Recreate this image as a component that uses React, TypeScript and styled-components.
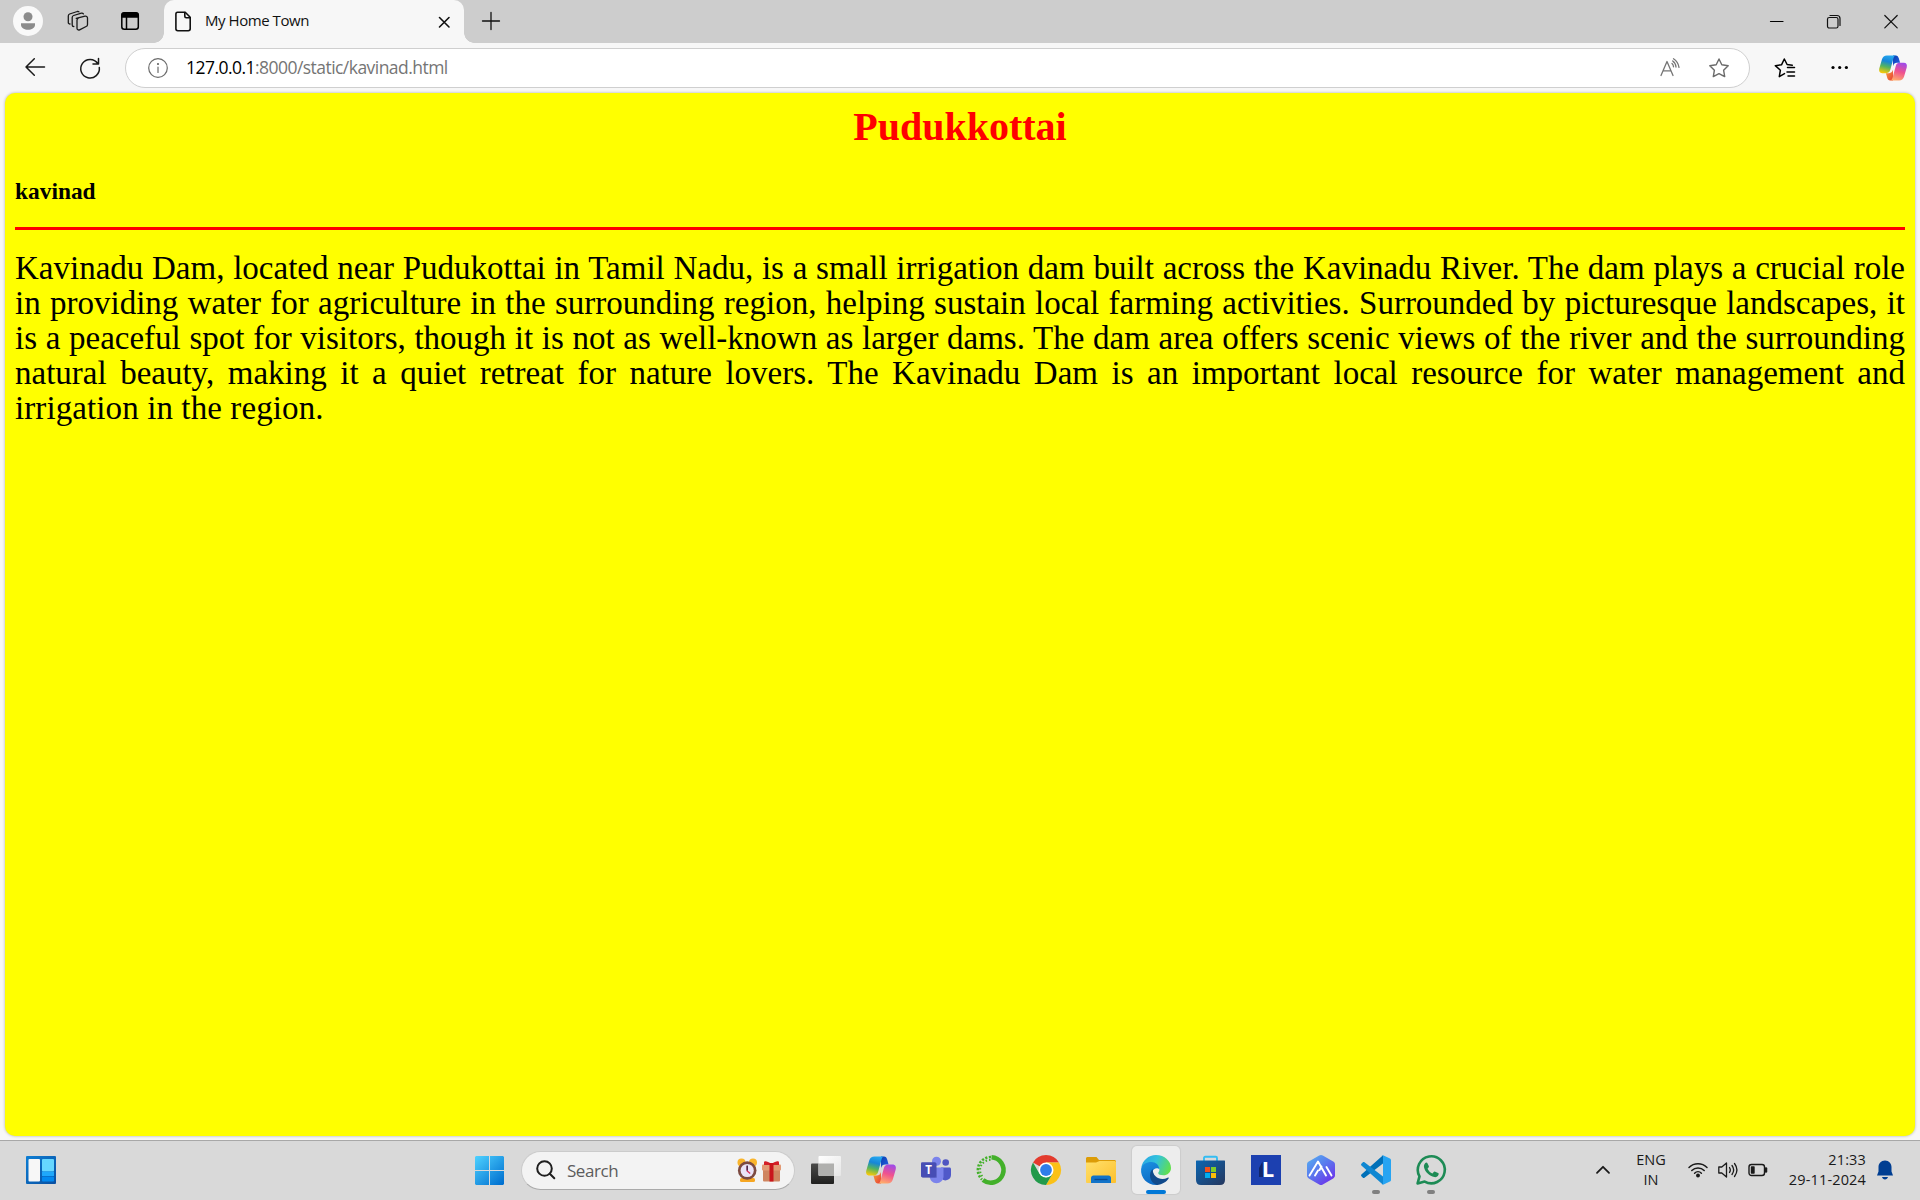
import React from "react";
import styled, { createGlobalStyle } from "styled-components";

const GlobalStyle = createGlobalStyle`
  * { box-sizing: border-box; }
  html, body, #root { margin: 0; padding: 0; height: 100%; }
  body { overflow: hidden; }
`;

const UI_FONT = `"Open Sans", "Noto Sans", sans-serif`;

const Desktop = styled.div`
  display: flex;
  flex-direction: column;
  width: 1920px;
  height: 1200px;
  background: #f7f7f7;
  font-family: ${UI_FONT};
  color: #1a1a1a;
`;

const Icon = styled.svg<{ $size: number }>`
  display: block;
  flex: none;
  width: ${(p) => p.$size}px;
  height: ${(p) => p.$size}px;
  overflow: visible;
`;

const Slot = styled.div<{ $width: number }>`
  display: flex;
  flex: none;
  align-items: center;
  justify-content: center;
  width: ${(p) => p.$width}px;
  height: 100%;
`;

const Spacer = styled.div`
  flex: 1;
`;

/* ---------- tab strip ---------- */

const TabStrip = styled.header`
  display: flex;
  flex: none;
  height: 43px;
  padding-left: 2px;
  background: #cdcdcd;
`;

const StripTools = styled.div`
  display: flex;
  width: 162px;
  height: 42px;
`;

const Avatar = styled.div`
  display: flex;
  align-items: center;
  justify-content: center;
  width: 30px;
  height: 30px;
  border-radius: 50%;
  background: #f9f9f9;
`;

const Tab = styled.div`
  position: relative;
  display: flex;
  align-items: center;
  width: 300px;
  height: 43px;
  padding: 0 10px 0 9px;
  border-radius: 10px 10px 0 0;
  background: #f7f7f7;

  &::before,
  &::after {
    content: "";
    position: absolute;
    bottom: 0;
    width: 10px;
    height: 10px;
  }
  &::before {
    left: -10px;
    background: radial-gradient(circle at 0 0, transparent 9.5px, #f7f7f7 10px);
  }
  &::after {
    right: -10px;
    background: radial-gradient(circle at 100% 0, transparent 9.5px, #f7f7f7 10px);
  }
`;

const TabTitle = styled.span`
  margin: -4px 0 0 11px;
  font-size: 15px;
  letter-spacing: -0.45px;
  color: #111;
  white-space: nowrap;
`;

/* ---------- toolbar ---------- */

const Toolbar = styled.nav`
  display: flex;
  flex: none;
  align-items: center;
  height: 50px;
  padding-left: 7px;
`;

const AddressBar = styled.div`
  display: flex;
  flex: none;
  align-items: center;
  width: 1625px;
  height: 40px;
  margin-left: 8px;
  padding-left: 12px;
  border: 1px solid #cfcfcf;
  border-radius: 20px;
  background: #fff;
`;

const Url = styled.span`
  margin: -2px 0 0 9px;
  font-size: 17.5px;
  letter-spacing: -0.54px;
  color: #757575;
  white-space: nowrap;

  b {
    font-weight: 400;
    color: #000;
  }
`;

/* ---------- page ---------- */

const PageFrame = styled.main`
  flex: 1;
  min-height: 0;
  margin: 0 5px 4px;
  padding: 9px 10px 0;
  border-radius: 10px;
  background: #ffff00;
  box-shadow: 0 0 3px rgba(0, 0, 0, 0.3);
  font-family: "Liberation Serif", serif;
  color: #000;
`;

const TownName = styled.h1`
  margin: 2px 0 0;
  font-size: 40px;
  line-height: 46px;
  text-align: center;
  color: #ff0000;
`;

const PlaceName = styled.h3`
  margin: 28px 0 0;
  font-size: 23.4px;
  line-height: 27px;
`;

const Rule = styled.hr`
  height: 3px;
  margin: 22px 0 21px;
  border: 0;
  background: #ff0000;
`;

const Article = styled.p`
  margin: 0;
  font-family: Georgia, "Liberation Serif", serif;
  font-size: 33px;
  line-height: 35px;
`;

const Line = styled.span<{ $last?: boolean }>`
  display: block;
  white-space: nowrap;
  text-align: justify;
  text-align-last: ${(p) => (p.$last ? "left" : "justify")};
  letter-spacing: ${(p) => (p.$last ? "0.1px" : "normal")};
`;

/* ---------- taskbar ---------- */

const Taskbar = styled.footer`
  display: flex;
  flex: none;
  align-items: center;
  height: 60px;
  padding-bottom: 1px;
  border-top: 1px solid #a8a8a8;
  background: #d9d9d9;
`;

const SearchBox = styled.div`
  display: flex;
  align-items: center;
  width: 274px;
  height: 39px;
  margin: 0 3.5px 0 4px;
  padding: 0 11px 0 14px;
  border: 1px solid #cbcbcb;
  border-bottom-color: #aaa;
  border-radius: 20px;
  background: #f3f3f3;
`;

const SearchLabel = styled.span`
  flex: 1;
  margin: 1px 0 0 11px;
  font-size: 17px;
  letter-spacing: -0.45px;
  color: #5c5c5c;
`;

const AppButton = styled.div<{ $active?: boolean }>`
  position: relative;
  display: flex;
  flex: none;
  align-items: center;
  justify-content: center;
  width: 48px;
  height: 48px;
  margin: 0 3.5px;
  border-radius: 5px;
  background: ${(p) => (p.$active ? "#ededed" : "transparent")};
  box-shadow: ${(p) => (p.$active ? "0 0 1px 1px rgba(0,0,0,0.06)" : "none")};
`;

const RunMark = styled.i<{ $active?: boolean }>`
  position: absolute;
  bottom: 0;
  width: ${(p) => (p.$active ? 20 : 8)}px;
  height: 4px;
  border-radius: 2px;
  background: ${(p) => (p.$active ? "#0078d7" : "#808080")};
`;

const TrayText = styled.div<{ $width: number; $align: string; $spacing: number }>`
  width: ${(p) => p.$width}px;
  font-size: 14.5px;
  line-height: 20px;
  letter-spacing: ${(p) => p.$spacing}px;
  text-align: ${(p) => p.$align};
  white-space: nowrap;
`;

/* ---------- line icons ---------- */

type Stroke = { size: number; color?: string; width?: number; children: React.ReactNode };

const LineIcon = ({ size, color = "#1a1a1a", width = 1.3, children }: Stroke) => (
  <Icon
    $size={size}
    viewBox={`0 0 ${size} ${size}`}
    fill="none"
    stroke={color}
    strokeWidth={width}
    strokeLinecap="round"
    strokeLinejoin="round"
  >
    {children}
  </Icon>
);

const Star = "M10 1l2.8 5.8 6.4.9-4.6 4.5 1.1 6.4L10 15.6l-5.7 3 1.1-6.4L.8 7.7l6.4-.9z";

/* ---------- colour icons ---------- */

const CopilotIcon = ({ size }: { size: number }) => (
  <Icon $size={size} viewBox="0 0 30 30">
    <defs>
      <linearGradient id="cpA" x1=".6" y1="0" x2=".35" y2="1">
        <stop offset="0" stopColor="#25a8f0" />
        <stop offset=".35" stopColor="#1686d8" />
        <stop offset=".65" stopColor="#54b45f" />
        <stop offset="1" stopColor="#f4c80a" />
      </linearGradient>
      <linearGradient id="cpB" x1=".7" y1="0" x2=".4" y2="1">
        <stop offset="0" stopColor="#a04be8" />
        <stop offset=".5" stopColor="#f0528e" />
        <stop offset="1" stopColor="#ffab6b" />
      </linearGradient>
      <linearGradient id="cpC" x1="0" y1="0" x2="1" y2="1">
        <stop offset="0" stopColor="#0a3fae" />
        <stop offset="1" stopColor="#2462e8" />
      </linearGradient>
      <linearGradient id="cpD" x1="0" y1="0" x2="1" y2="1">
        <stop offset="0" stopColor="#f9a13a" />
        <stop offset="1" stopColor="#e63f35" />
      </linearGradient>
    </defs>
    <path d="M15 1.5h3c1.800 0 2.600 1.200 3.200 3L22.600 9.500h-3.400c-2.300 0-3.300 1-4.200 3.500z" fill="url(#cpC)" />
    <path d="M15 28.500h-3c-1.800 0-2.600-1.200-3.200-3L7.400 20.500h3.400c2.300 0 3.300-1 4.200-3.500z" fill="url(#cpD)" />
    <path d="M8.500 1.500h10c-1.800 0-2.500 1.300-3 3l-3.400 12.500c-.7 2.300-2 3.500-4.300 3.500H3.500C.6 20.500-.4 18.300.3 15.500L3.200 5.600C4 3 5.700 1.500 8.500 1.500z" fill="url(#cpA)" />
    <path d="M21.500 28.500h-10c1.800 0 2.500-1.300 3-3l3.400-12.500c.7-2.300 2-3.500 4.300-3.500h4.300c2.900 0 3.900 2.200 3.200 5l-2.900 9.900c-.8 2.600-2.500 4.100-5.300 4.100z" fill="url(#cpB)" />
  </Icon>
);

const WidgetsIcon = () => (
  <Icon $size={30} viewBox="0 0 30 30">
    <defs>
      <linearGradient id="wg" x1="0" y1="0" x2="1" y2="1">
        <stop offset="0" stopColor="#0d7ed4" />
        <stop offset="1" stopColor="#0a4fa0" />
      </linearGradient>
    </defs>
    <rect y="1" width="30" height="28" rx="1" fill="url(#wg)" />
    <rect x="2.500" y="4" width="11.500" height="22.500" rx="1" fill="#f7f7f7" />
    <rect x="16" y="4" width="12" height="12.500" rx="1" fill="#66d7ff" />
    <rect x="16" y="16.500" width="12" height="4.500" fill="#1fa8fb" />
    <rect x="16" y="21.500" width="12" height="5" rx=".8" fill="#0389ef" />
  </Icon>
);

const StartIcon = () => (
  <Icon $size={29} viewBox="0 0 29 29">
    <defs>
      <linearGradient id="st" gradientUnits="userSpaceOnUse" x1="0" y1="0" x2="26" y2="29">
        <stop offset="0" stopColor="#4fd2ff" />
        <stop offset="1" stopColor="#0070d0" />
      </linearGradient>
    </defs>
    <path d="M1 0h13v14H0V1zM15 0h13l1 1v13H15zM0 15h14v14H1l-1-1zM15 15h14v13l-1 1H15z" fill="url(#st)" />
  </Icon>
);

const ClockIcon = () => (
  <Icon $size={24} viewBox="0 0 24 24">
    <rect x="5" y="20" width="15" height="4" rx="1.500" fill="#f6a621" />
    <circle cx="6.500" cy="4.500" r="4" fill="#f9b52c" />
    <circle cx="18" cy="4.500" r="4" fill="#f9b52c" />
    <circle cx="12.200" cy="12.500" r="9.300" fill="#7c4a41" />
    <circle cx="12.200" cy="12.500" r="6.600" fill="#e9e3f7" />
    <path d="M12.200 8v5l3 2.500" stroke="#dc2a57" strokeWidth="1.300" fill="none" />
    <path d="M12.200 7.500v5" stroke="#3c2c4c" strokeWidth="1.400" />
  </Icon>
);

const GiftIcon = () => (
  <Icon $size={24} viewBox="0 0 24 24">
    <rect x="4" y="10" width="17" height="13.500" rx="1" fill="#cf8560" />
    <rect x="3" y="6.500" width="19" height="6" rx="1" fill="#e39a74" />
    <path d="M5 7V4.500C5 2.500 8 2.500 12.500 6 17 2.500 20 2.500 20 4.500V7z" fill="#d41f28" />
    <rect x="10.500" y="5" width="4" height="18.500" fill="#c9151d" />
  </Icon>
);

const TaskViewIcon = () => (
  <Icon $size={30} viewBox="0 0 30 30">
    <defs>
      <linearGradient id="tvA" x1="0" y1="0" x2="0" y2="1">
        <stop offset="0" stopColor="#4a4a49" />
        <stop offset="1" stopColor="#20201f" />
      </linearGradient>
      <linearGradient id="tvB" x1="0" y1="0" x2="1" y2="1">
        <stop offset="0" stopColor="#fff" />
        <stop offset="1" stopColor="#e6e6e6" />
      </linearGradient>
    </defs>
    <rect y="8.500" width="23" height="20.500" rx="1" fill="url(#tvA)" />
    <rect x="7.500" y="1" width="22.500" height="20" rx="1" fill="url(#tvB)" />
    <path d="M7.500 8.500H23V21H8.500l-1-1z" fill="#b0b0ae" />
  </Icon>
);

const TeamsIcon = () => (
  <Icon $size={30} viewBox="0 0 30 30">
    <circle cx="24.700" cy="7.500" r="3.300" fill="#4f55c2" />
    <path d="M20 12.500h8.500c.8 0 1.500.7 1.500 1.500v6a5.500 5.500 0 01-10 3z" fill="#5059c9" />
    <circle cx="15.500" cy="6.300" r="4.500" fill="#7b83eb" />
    <path d="M9 12.500h12.200c.8 0 1.300.6 1.300 1.400v7.300c0 4-3.200 7-7 7s-6.800-3-6.800-7z" fill="#7b83eb" />
    <rect x="1" y="8" width="15" height="15" rx="1.200" fill="#3e43a0" opacity=".45" />
    <rect y="7.300" width="15" height="15" rx="1.200" fill="#474db4" />
    <text x="7.500" y="18.700" textAnchor="middle" fontFamily="Open Sans, sans-serif" fontWeight="700" fontSize="11.500" fill="#fff">T</text>
  </Icon>
);

const AnacondaIcon = () => (
  <Icon $size={30} viewBox="0 0 30 30" fill="none" stroke="#43b02a">
    <path d="M15.500 2.300A12.700 12.700 0 117 25" strokeWidth="4.600" />
    <path d="M15 2A13 13 0 006 24.500" strokeWidth="2.600" strokeDasharray="2.200 1.500" />
    <path d="M14.500 5A10 10 0 006.500 21.500" strokeWidth="2" strokeDasharray="1.500 2" />
  </Icon>
);

const ChromeIcon = () => (
  <Icon $size={30} viewBox="0 0 30 30">
    <path d="M15 15L2 7.500A15 15 0 0128 7.500H15z" fill="#e33b2e" />
    <path d="M15 7.500h13A15 15 0 0115 30l6.500-11.200z" fill="#fbc116" />
    <path d="M2 7.500A15 15 0 0015 30l6.500-11.300L15 22.500l-6.500-3.800z" fill="#229a4b" />
    <circle cx="15" cy="15" r="7.500" fill="#fff" />
    <circle cx="15" cy="15" r="5.900" fill="#2f7de9" />
  </Icon>
);

const ExplorerIcon = () => (
  <Icon $size={30} viewBox="0 0 30 30">
    <defs>
      <linearGradient id="ex" x1="0" y1="0" x2="1" y2="1">
        <stop offset="0" stopColor="#ffe06c" />
        <stop offset="1" stopColor="#fdc02c" />
      </linearGradient>
    </defs>
    <path d="M1 2h9.500L13 5h16l1 1v6H0V3z" fill="#dc9c07" />
    <path d="M0 7.500h10L13.500 6H29l1 1v20.500l-1 .5H1l-1-.5z" fill="url(#ex)" />
    <path d="M5 28v-5c0-1.600 1-2.500 2.500-2.500h15c1.500 0 2.500 1 2.500 2.500v5z" fill="#1273c8" />
    <path d="M8.500 24.500h13" stroke="#0b4b91" strokeWidth="1.300" />
  </Icon>
);

const EdgeIcon = () => (
  <Icon $size={30} viewBox="0 0 30 30">
    <defs>
      <linearGradient id="egA" x1="0" y1=".3" x2="1" y2=".6">
        <stop offset="0" stopColor="#2aa6e2" />
        <stop offset=".45" stopColor="#32c2dd" />
        <stop offset="1" stopColor="#62e04c" />
      </linearGradient>
      <linearGradient id="egB" x1=".2" y1="0" x2=".5" y2="1">
        <stop offset="0" stopColor="#1a8fe0" />
        <stop offset="1" stopColor="#0c69c4" />
      </linearGradient>
    </defs>
    <path d="M.3 12.500C1.500 5.500 7.500 0 15 0c8.700 0 15 6.200 15 13 0 4.600-3.700 7.300-7.500 7.300-3.400 0-5.300-1-5.300-2.300 0-.9 1.200-1.300 1.200-3.300 0-3-2.900-5.700-7.400-5.700C7 9 3 10 .3 12.500z" fill="url(#egA)" />
    <path d="M.1 14C.8 9.500 5.500 7 10.500 7c4 0 7.900 3 7.900 7.500-1-2.200-6.400-2-6.800 2.500L17 29.800c-.7.100-1.300.2-2 .2C6.500 30-.7 23 .1 14z" fill="url(#egB)" />
    <path d="M11.700 14c-4.500 4-3.500 13.500 4.300 16 5.500-.4 9.200-3 11.600-6.400.5-.8-.2-1.400-1-.9C20 26 11.500 22.500 11.700 14z" fill="#114a8b" />
  </Icon>
);

const StoreIcon = () => (
  <Icon $size={30} viewBox="0 0 30 30">
    <defs>
      <linearGradient id="so" x1="0" y1="0" x2="1" y2="1">
        <stop offset="0" stopColor="#0b66b2" />
        <stop offset="1" stopColor="#26375e" />
      </linearGradient>
    </defs>
    <path d="M8 6.500V3c0-.8.400-1.200 1.200-1.200h10.600c.8 0 1.200.4 1.200 1.200v3.500" fill="none" stroke="#35bdf2" strokeWidth="1.900" />
    <path d="M.5 5.500h28c.4 0 .5.200.5.500v19c0 3-1.700 5-5 5H5c-3.300 0-5-2-5-5V6c0-.3.100-.5.500-.5z" fill="url(#so)" />
    <rect x="9" y="12" width="5" height="5" fill="#f1511b" />
    <rect x="15" y="12" width="5" height="5" fill="#80cc28" />
    <rect x="9" y="18" width="5" height="5" fill="#00adef" />
    <rect x="15" y="18" width="5" height="5" fill="#fbbc09" />
  </Icon>
);

const LAppIcon = () => (
  <Icon $size={30} viewBox="0 0 30 30">
    <rect width="30" height="30" fill="#1c40b0" />
    <path d="M11.500 6.500L8 13v9h4z" fill="#10266b" />
    <text x="17" y="22" textAnchor="middle" fontFamily="Open Sans, sans-serif" fontWeight="700" fontSize="22" fill="#fff">L</text>
  </Icon>
);

const HexAppIcon = () => (
  <Icon $size={30} viewBox="0 0 30 30">
    <defs>
      <linearGradient id="hx" x1="0" y1="0" x2=".8" y2="1">
        <stop offset="0" stopColor="#54b3f0" />
        <stop offset=".5" stopColor="#5a78ee" />
        <stop offset="1" stopColor="#6c2fea" />
      </linearGradient>
    </defs>
    <path d="M13.200.6c1.200-.7 2.400-.7 3.600 0l10.400 6C28.400 7.300 29 8.300 29 9.700v10.600c0 1.400-.6 2.400-1.800 3.100l-10.400 6c-1.200.7-2.400.7-3.600 0l-10.400-6C1.600 22.700 1 21.700 1 20.300V9.700c0-1.400.6-2.400 1.800-3.100z" fill="url(#hx)" />
    <path d="M3.500 20.500l8.500-14 8 14M9 20.500l3-5M15.500 11.500l-2 3.500M20.500 12l5 8.500" fill="none" stroke="#fff" strokeWidth="1.900" strokeLinecap="round" strokeLinejoin="round" />
  </Icon>
);

const CodeIcon = () => (
  <Icon $size={30} viewBox="0 0 30 30">
    <path d="M22 .3V8.500L3.500 22.800c-.5.400-1.200.4-1.600 0L.4 21.300c-.5-.5-.5-1.200 0-1.700z" fill="#0070b8" />
    <path d="M22 29.700V21.500L3.500 7.200c-.5-.4-1.200-.4-1.600 0L.4 8.700c-.5.500-.5 1.200 0 1.700z" fill="#0f87d2" />
    <path d="M22 .2l7 3.300c.6.300 1 .9 1 1.600v19.800c0 .7-.4 1.300-1 1.600l-7 3.300c-.5.200-1 .2-1.500-.3.800.6 1.500.1 1.500-.8V1.300c0-.9-.8-1.400-1.500-.8.500-.5 1-.5 1.500-.3z" fill="#27a4f2" />
  </Icon>
);

const WhatsAppIcon = () => (
  <Icon $size={30} viewBox="0 0 30 30">
    <path d="M1.600 28.400l1.900-7A13.500 13.500 0 118.700 26.600z" fill="none" stroke="#1d8b55" strokeWidth="2.600" strokeLinejoin="round" />
    <path d="M9.300 8c.6-.7 1.600-.7 2 0l1.500 3c.3.600.1 1.100-.3 1.600l-1 1.200c1.200 2.300 2.800 3.800 5 4.700l1.200-1.400c.4-.5.900-.7 1.500-.4l2.900 1.400c.6.300.7.800.5 1.500-.7 2-2.500 2.800-4.300 2.500C13.500 21.300 9 17 8 12.300c-.3-1.600.2-3.200 1.300-4.300z" fill="#1d8b55" />
  </Icon>
);

const BellIcon = () => (
  <Icon $size={20} viewBox="0 0 20 20" fill="#003e92">
    <path d="M10 .5c4 0 6.500 3 6.500 6.500v4.500l1.500 4H2l1.500-4V7C3.500 3.500 6 .5 10 .5zM7 17h6c-.4 1.600-1.500 2.500-3 2.500S7.400 18.600 7 17z" />
  </Icon>
);

const pinnedApps = [
  { name: "Task view", art: <TaskViewIcon /> },
  { name: "Copilot", art: <CopilotIcon size={30} /> },
  { name: "Teams", art: <TeamsIcon /> },
  { name: "Anaconda", art: <AnacondaIcon /> },
  { name: "Chrome", art: <ChromeIcon /> },
  { name: "Explorer", art: <ExplorerIcon /> },
  { name: "Edge", art: <EdgeIcon />, running: true, active: true },
  { name: "Store", art: <StoreIcon /> },
  { name: "L", art: <LAppIcon /> },
  { name: "Hex", art: <HexAppIcon /> },
  { name: "Code", art: <CodeIcon />, running: true },
  { name: "WhatsApp", art: <WhatsAppIcon />, running: true },
];

const articleLines = [
  "Kavinadu Dam, located near Pudukottai in Tamil Nadu, is a small irrigation dam built across the Kavinadu River. The dam plays a crucial role",
  "in providing water for agriculture in the surrounding region, helping sustain local farming activities. Surrounded by picturesque landscapes, it",
  "is a peaceful spot for visitors, though it is not as well-known as larger dams. The dam area offers scenic views of the river and the surrounding",
  "natural beauty, making it a quiet retreat for nature lovers. The Kavinadu Dam is an important local resource for water management and",
  "irrigation in the region.",
];

export default function App() {
  return (
    <Desktop>
      <GlobalStyle />

      <TabStrip>
        <StripTools>
          <Slot $width={52}>
            <Avatar>
              <Icon $size={20} viewBox="0 0 20 20" fill="#8c8c8c">
                <circle cx="10" cy="5.800" r="4.500" />
                <path d="M3 12.300h14V14c0 3-3.500 4.800-7 4.800S3 17 3 14z" />
              </Icon>
            </Avatar>
          </Slot>
          <Slot $width={48}>
            <LineIcon size={22}>
              <path d="M9.200 8.300l8.800-2.200c1.300-.3 2.500.5 2.500 1.900v6.500c0 1-.5 1.700-1.400 2l-6.500 3.300c-1.300.5-2.600 0-2.600-1.600V10.300c0-1 .3-1.700 1.200-2z" />
              <path d="M6.800 16.500c-1 0-1.600-.5-1.600-1.600V7.500c0-1 .4-1.700 1.400-2l7.800-2.300c.9-.2 1.500 0 2 .7" />
              <path d="M3 14c-1 0-1.700-.6-1.700-1.600V6c0-1 .4-1.600 1.300-2l7.700-2.500c.8-.2 1.300 0 1.700.4" />
            </LineIcon>
          </Slot>
          <Slot $width={56}>
            <LineIcon size={18} width={1.5} color="#000">
              <rect x=".8" y=".8" width="16.500" height="16.500" rx="2.500" />
              <path d="M1 3.500C1 2 1.800 1 3.500 1h11C16 1 17 2 17 3.500V5H1z" fill="#000" />
              <path d="M5.500 5.500V17" />
            </LineIcon>
          </Slot>
        </StripTools>
        <Tab>
          <LineIcon size={21} width={1.6} color="#111">
            <path d="M4.500 1.300h7.700l5 5v11.500c0 1.200-.6 1.900-1.900 1.900H4.800c-1.200 0-1.900-.7-1.900-1.900V3.200c0-1.200.6-1.900 1.600-1.900z" />
            <path d="M11.800 1.500v3.700c0 1 .5 1.500 1.500 1.500H17" />
          </LineIcon>
          <TabTitle>My Home Town</TabTitle>
          <Spacer />
          <LineIcon size={20} width={1.6} color="#111">
            <path d="M5.500 5.500l9.500 9.500M15 5.500L5.500 15" />
          </LineIcon>
        </Tab>
        <Slot $width={53}>
          <LineIcon size={20} width={1.3} color="#111">
            <path d="M1.500 9h17M10 .5v17" />
          </LineIcon>
        </Slot>
        <Spacer />
        <Slot $width={57}>
          <LineIcon size={14} width={1.2} color="#000">
            <path d="M.5 6.500H13" />
          </LineIcon>
        </Slot>
        <Slot $width={57}>
          <LineIcon size={14} width={1.2} color="#111">
            <rect x=".5" y="2.500" width="10.500" height="10.500" rx="1.800" />
            <path d="M3 .5h7c1.800 0 3 1.200 3 3v7" />
          </LineIcon>
        </Slot>
        <Slot $width={58}>
          <LineIcon size={14} width={1.2} color="#111">
            <path d="M.8.500l12.400 12.400M13.200.500L.8 12.900" />
          </LineIcon>
        </Slot>
      </TabStrip>

      <Toolbar>
        <Slot $width={55}>
          <LineIcon size={20} width={1.5}>
            <path d="M19.500 9H1M9.300.8L1 9l8.300 8.200" />
          </LineIcon>
        </Slot>
        <Slot $width={55}>
          <LineIcon size={20} width={1.5}>
            <path d="M17.800 5.500A9.300 9.300 0 1019.300 9.500M18.500.5v5.500h-5.500" />
          </LineIcon>
        </Slot>
        <AddressBar>
          <Slot $width={39}>
            <LineIcon size={20} width={1.2} color="#6b6b6b">
              <circle cx="10" cy="10" r="9.300" />
              <path d="M10 9v5.500" />
              <circle cx="10" cy="6" r=".5" fill="#6b6b6b" />
            </LineIcon>
          </Slot>
          <Url>
            <b>127.0.0.1</b>:8000/static/kavinad.html
          </Url>
          <Spacer />
          <Slot $width={39}>
            <LineIcon size={20} width={1.3} color="#757575">
              <path d="M1 17.500L7 3.500l6 14M3.200 12.800h7.600M12 5.500c1 .8 1.500 2 1.500 3.300M12.700 3c2 1.500 3.200 3.300 3.300 6M13.500.800c3 2 4.900 4.800 5.500 8.500" />
            </LineIcon>
          </Slot>
          <Slot $width={60}>
            <LineIcon size={20} width={1.4} color="#6b6b6b">
              <path d={Star} />
            </LineIcon>
          </Slot>
        </AddressBar>
        <Slot $width={70}>
          <LineIcon size={20} width={1.5} color="#000">
            <path d="M9.500 15.600l-5.200 3 1.100-6.400L.3 7.700l6.200-.9L9.300 1l2.800 5.500 5.200.7M12.500 9.500h7M12 14h7.500M13 18h6.500" />
          </LineIcon>
        </Slot>
        <Slot $width={40}>
          <Icon $size={18} viewBox="0 0 18 18" fill="#000">
            <circle cx="2" cy="8.500" r="1.600" />
            <circle cx="8.700" cy="8.500" r="1.600" />
            <circle cx="15.400" cy="8.500" r="1.600" />
          </Icon>
        </Slot>
        <Spacer />
        <Slot $width={54}>
          <CopilotIcon size={28} />
        </Slot>
      </Toolbar>

      <PageFrame>
        <TownName>Pudukkottai</TownName>
        <PlaceName>kavinad</PlaceName>
        <Rule />
        <Article>
          {articleLines.map((text, i) => (
            <Line key={text} $last={i === articleLines.length - 1}>
              {text}
            </Line>
          ))}
        </Article>
      </PageFrame>

      <Taskbar>
        <Slot $width={82}>
          <WidgetsIcon />
        </Slot>
        <Slot $width={380} />
        <Slot $width={55}>
          <StartIcon />
        </Slot>
        <SearchBox>
          <LineIcon size={20} width={2} color="#1f1f1f">
            <circle cx="8.500" cy="8.500" r="7.300" />
            <path d="M13.800 13.800l4.500 4.500" />
          </LineIcon>
          <SearchLabel>Search</SearchLabel>
          <ClockIcon />
          <GiftIcon />
        </SearchBox>
        {pinnedApps.map((app) => (
          <AppButton key={app.name} $active={app.active}>
            {app.art}
            {app.running && <RunMark $active={app.active} />}
          </AppButton>
        ))}
        <Spacer />
        <Slot $width={40}>
          <LineIcon size={14} width={1.8}>
            <path d="M1 9.800l6-6 6 6" />
          </LineIcon>
        </Slot>
        <TrayText $width={56} $align="center" $spacing={0}>
          ENG
          <br />
          IN
        </TrayText>
        <Slot $width={38}>
          <LineIcon size={20} width={1.5}>
            <path d="M1 7.500a12.800 12.800 0 0118 0M3.800 10.500a8.800 8.800 0 0112.400 0M6.600 13.200a4.900 4.900 0 016.800 0" />
            <circle cx="10" cy="15.500" r="1.200" fill="#1a1a1a" />
          </LineIcon>
        </Slot>
        <Slot $width={22}>
          <LineIcon size={20} width={1.3}>
            <path d="M.8 7v6h3l4.700 4V3L3.800 7zM11.500 7.500c1 1.500 1 3.500 0 5M14 5.500c2 2.700 2 6.300 0 9M16.500 3.500c3 4 3 9 0 13" />
          </LineIcon>
        </Slot>
        <Slot $width={38}>
          <LineIcon size={20} width={1.4}>
            <rect x="1" y="4.500" width="15.500" height="11" rx="2.500" />
            <rect x="3.500" y="7" width="2.500" height="6" fill="#1a1a1a" />
            <path d="M18 8.500v3" strokeWidth="2.500" />
          </LineIcon>
        </Slot>
        <TrayText $width={89} $align="right" $spacing={0.15}>
          21:33
          <br />
          29-11-2024
        </TrayText>
        <Slot $width={38}>
          <BellIcon />
        </Slot>
        <Slot $width={16} />
      </Taskbar>
    </Desktop>
  );
}
